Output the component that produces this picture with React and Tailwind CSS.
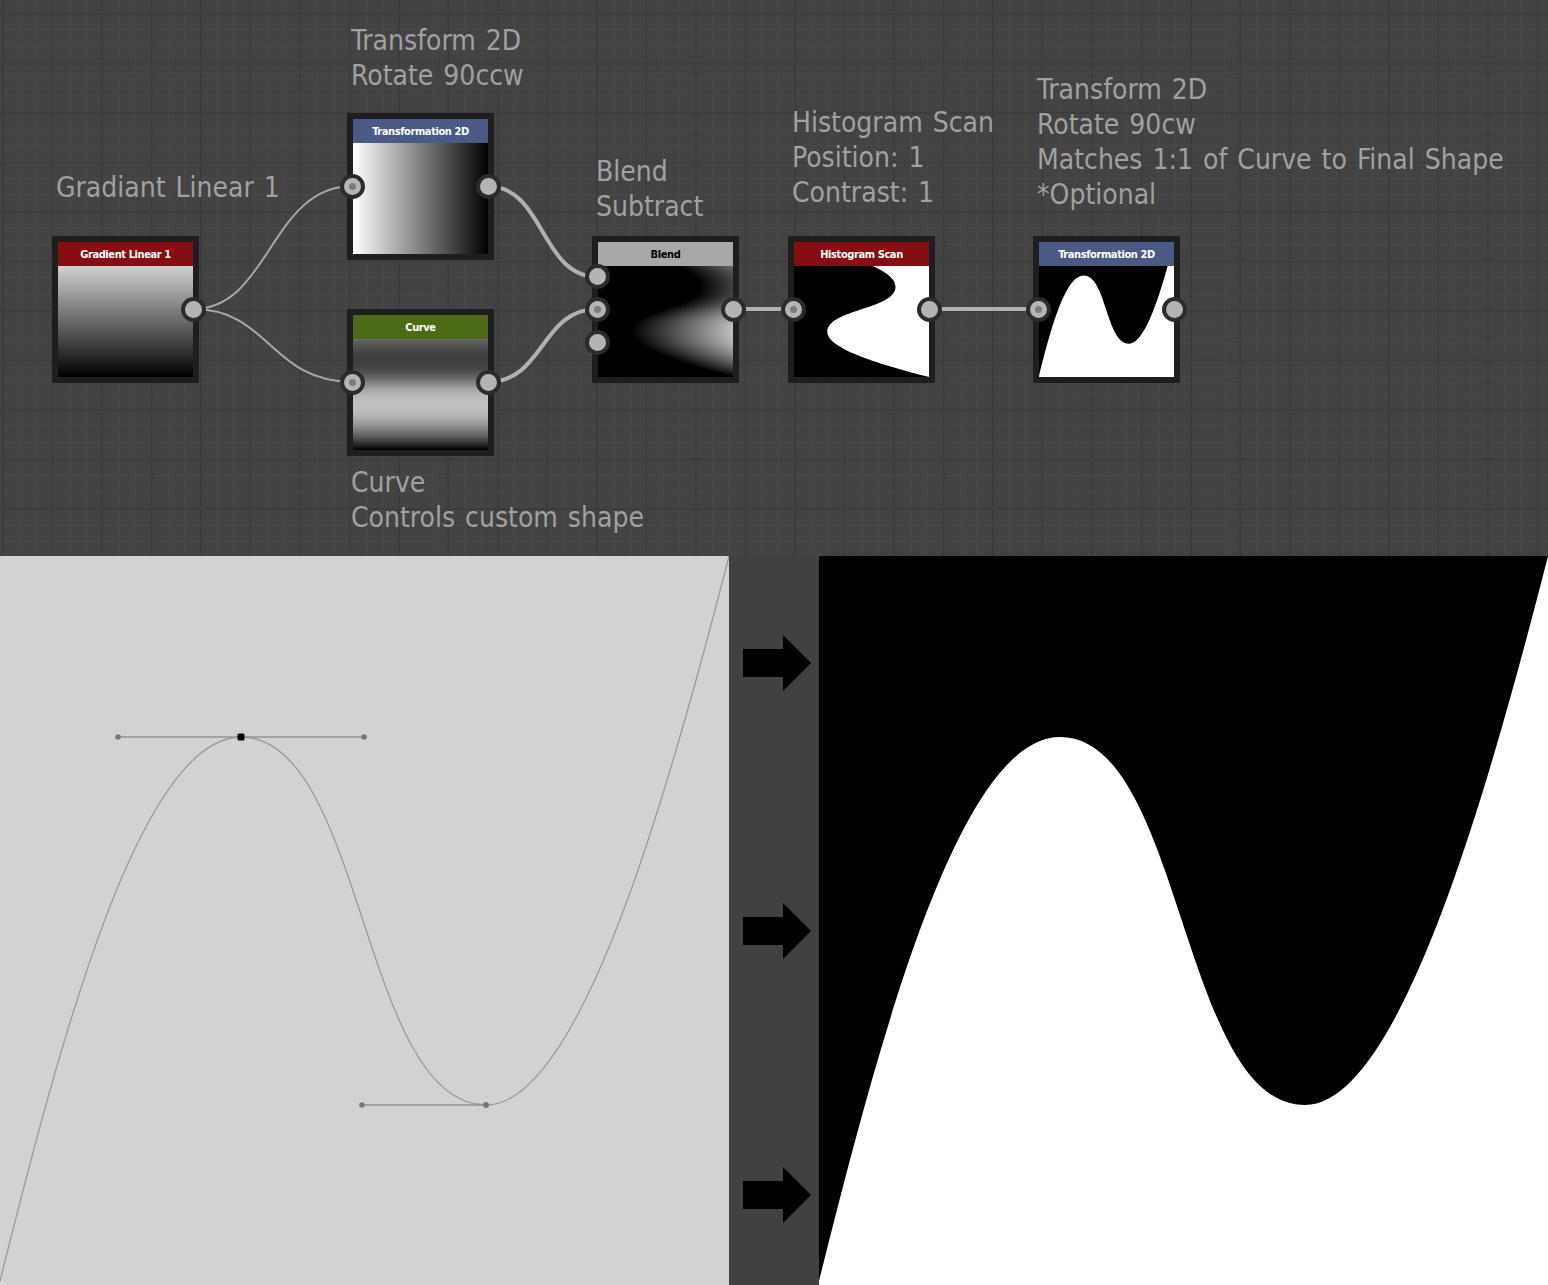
import React from 'react';

// the one curve everything in the graph is derived from, in a 729 x 729 box
const SEGMENTS = [
  [[0, 725], [60, 485], [140, 181], [241, 181]],
  [[241, 181], [364, 181], [362, 549], [486, 549]],
  [[486, 549], [580, 549], [668, 238], [728, 4]],
];
const CURVE = 'M0 725 C60 485 140 181 241 181 C364 181 362 549 486 549 C580 549 668 238 728 4 L729 0';

function bez(a, b, c, d, t) {
  const u = 1 - t;
  return u * u * u * a + 3 * u * u * t * b + 3 * u * t * t * c + t * t * t * d;
}

const samples = SEGMENTS.flatMap((s) =>
  Array.from({ length: 200 }, (_, i) => {
    const t = i / 199;
    return [bez(s[0][0], s[1][0], s[2][0], s[3][0], t), bez(s[0][1], s[1][1], s[2][1], s[3][1], t)];
  })
);

// height of the curve from the top (0..1) at a given x (0..1)
function curveAt(r) {
  const x = r * 729;
  const hit = samples.find((p) => p[0] >= x) || samples[samples.length - 1];
  return hit[1] / 729;
}

const ROWS = Array.from({ length: 111 }, (_, i) => 24 + i);

function CurveThumb() {
  return (
    <svg viewBox="0 24 135 111" className="block w-[135px] h-[111px]" shapeRendering="crispEdges">
      {ROWS.map((y) => {
        const g = Math.round(curveAt((y + 0.5) / 135) * 255);
        return <rect key={y} x="0" y={y} width="135" height="1" fill={`rgb(${g},${g},${g})`} />;
      })}
    </svg>
  );
}

function BlendThumb() {
  return (
    <svg viewBox="0 24 135 111" className="block w-[135px] h-[111px] bg-black" shapeRendering="crispEdges">
      <defs>
        <linearGradient id="ramp">
          <stop offset="0" stopColor="#000" />
          <stop offset="1" stopColor="#fff" />
        </linearGradient>
      </defs>
      {ROWS.map((y) => {
        const x = (1 - curveAt((y + 0.5) / 135)) * 135;
        return <rect key={y} x={x} y={y} width="135" height="1" fill="url(#ramp)" />;
      })}
    </svg>
  );
}

function ScanThumb() {
  return (
    <svg viewBox="0 24 135 111" className="block w-[135px] h-[111px] bg-black">
      <g transform="scale(0.18519) translate(729 0) rotate(90)">
        <path d={`${CURVE} L0 0 Z`} fill="#fff" />
      </g>
    </svg>
  );
}

function FinalThumb() {
  return (
    <svg viewBox="0 24 135 111" className="block w-[135px] h-[111px] bg-white">
      <g transform="scale(0.18519)">
        <path d={`${CURVE} L0 0 Z`} fill="#000" />
      </g>
    </svg>
  );
}

function Port({ input }) {
  return (
    <div className="w-[25px] h-[25px] rounded-full bg-[#b4b4b4] border-[4px] border-[#2b2b2b] flex items-center justify-center">
      {input && <div className="w-[7px] h-[7px] rounded-full bg-[#7c7c7c]" />}
    </div>
  );
}

function Node({ className, title, headerClass, inputs = [], children }) {
  return (
    <div className={`absolute w-[147px] h-[147px] border-[6px] border-[#1e1e1e] ${className}`}>
      <div className={`h-[24px] pt-[3px] flex items-center justify-center text-[11px] tracking-[-0.4px] font-bold font-['DejaVu_Sans_Condensed','DejaVu_Sans',sans-serif] ${headerClass}`}>
        {title}
      </div>
      {children}
      <div className="absolute inset-y-0 -left-[13px] flex flex-col justify-center gap-[8px]">
        {inputs.map((dot, i) => (
          <Port key={i} input={dot} />
        ))}
      </div>
      <div className="absolute inset-y-0 -right-[12.5px] flex flex-col justify-center">
        <Port />
      </div>
    </div>
  );
}

function Label({ className, lines }) {
  return (
    <div className={`absolute text-[28px] leading-[35px] [word-spacing:2px] whitespace-nowrap text-[#a1a1a1] font-['DejaVu_Sans_Condensed','DejaVu_Sans',sans-serif] ${className}`}>
      {lines.map((l) => (
        <div key={l}>{l}</div>
      ))}
    </div>
  );
}

function Arrow() {
  return (
    <svg width="68" height="56" viewBox="0 0 68 56" className="block">
      <path d="M0 14 H40 V0 L68 28 L40 56 V42 H0 Z" fill="#000" />
    </svg>
  );
}

export default function App() {
  return (
    <div className="w-[1548px] h-[1285px] overflow-hidden bg-[#414141]">
      {/* node graph */}
      <div className="relative h-[556px] bg-[#434343] [background-image:linear-gradient(90deg,#3d3d3d_2px,transparent_2px),linear-gradient(#3d3d3d_2px,transparent_2px),linear-gradient(90deg,#484848_1px,transparent_1px),linear-gradient(#484848_1px,transparent_1px)] [background-size:49.5px_49.5px,49.5px_49.5px,16.5px_16.5px,16.5px_16.5px] [background-position:2px_0,0_13px,3px_0,0_13px]">
        <svg width="1548" height="556" className="absolute inset-0">
          <g fill="none" stroke="#a8a8a8" strokeWidth="2">
            <path d="M193 309 C270 309 270 186 353 186" />
            <path d="M193 309 C270 309 270 382 353 382" />
          </g>
          <g fill="none" stroke="#b0b0b0" strokeWidth="4">
            <path d="M487 186 C545 186 540 277 598 277" />
            <path d="M487 382 C545 382 540 309 598 309" />
            <path d="M733 309 H794" />
            <path d="M929 309 H1039" />
          </g>
        </svg>

        <Label className="left-[56px] top-[170px]" lines={['Gradiant Linear 1']} />
        <Label className="left-[351px] top-[23px]" lines={['Transform 2D', 'Rotate 90ccw']} />
        <Label className="left-[351px] top-[465px]" lines={['Curve', 'Controls custom shape']} />
        <Label className="left-[596px] top-[154px]" lines={['Blend', 'Subtract']} />
        <Label className="left-[792px] top-[105px]" lines={['Histogram Scan', 'Position: 1', 'Contrast: 1']} />
        <Label className="left-[1037px] top-[72px]" lines={['Transform 2D', 'Rotate 90cw', 'Matches 1:1 of Curve to Final Shape', '*Optional']} />

        <Node className="left-[52px] top-[236px]" title="Gradient Linear 1" headerClass="bg-[#860e12] text-white">
          <div className="h-[111px] bg-[linear-gradient(to_bottom,#d1d1d1,#000)]" />
        </Node>

        <Node className="left-[347px] top-[113px]" title="Transformation 2D" headerClass="bg-[#4a5a85] text-white" inputs={[true]}>
          <div className="h-[111px] bg-[linear-gradient(to_right,#fff,#000)]" />
        </Node>

        <Node className="left-[347px] top-[309px]" title="Curve" headerClass="bg-[#4d6a17] text-white" inputs={[true]}>
          <CurveThumb />
        </Node>

        <Node className="left-[592px] top-[236px]" title="Blend" headerClass="bg-[#a8a8a8] text-black" inputs={[false, true, false]}>
          <BlendThumb />
        </Node>

        <Node className="left-[788px] top-[236px]" title="Histogram Scan" headerClass="bg-[#860e12] text-white" inputs={[true]}>
          <ScanThumb />
        </Node>

        <Node className="left-[1033px] top-[236px]" title="Transformation 2D" headerClass="bg-[#4a5a85] text-white" inputs={[true]}>
          <FinalThumb />
        </Node>
      </div>

      {/* curve editor, arrows, result */}
      <div className="flex h-[729px]">
        <div className="w-[729px] h-[729px] bg-[#d2d2d2]">
          <svg width="729" height="729" viewBox="0 0 729 729" className="block">
            <path d={CURVE} fill="none" stroke="#9a9a9a" strokeWidth="1.3" />
            <path d="M118 181 H364 M362 549 H486" fill="none" stroke="#949494" strokeWidth="1.5" />
            <circle cx="118" cy="181" r="2.8" fill="#777" />
            <circle cx="364" cy="181" r="2.8" fill="#777" />
            <circle cx="362" cy="549" r="2.8" fill="#777" />
            <circle cx="486" cy="549" r="3" fill="#777" />
            <rect x="237.5" y="177.5" width="7" height="7" rx="1.5" fill="#000" />
          </svg>
        </div>
        <div className="w-[90px] flex flex-col pl-[14px] pt-[79px]">
          <div className="mb-[212px]"><Arrow /></div>
          <div className="mb-[208px]"><Arrow /></div>
          <Arrow />
        </div>
        <div className="w-[729px] h-[729px] bg-white">
          <svg width="729" height="729" viewBox="0 0 729 729" className="block">
            <path d={`${CURVE} L0 0 Z`} fill="#000" />
          </svg>
        </div>
      </div>
    </div>
  );
}
